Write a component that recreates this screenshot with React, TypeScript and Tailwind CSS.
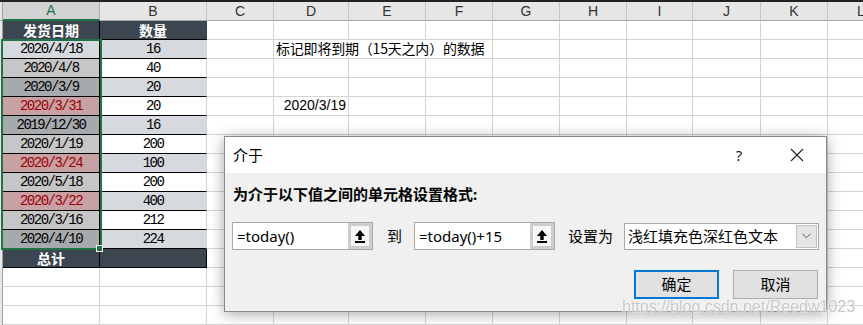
import React from 'react';

const REST = [
  'w-[67px]',
  'w-[75px]',
  'w-[77px]',
  'w-[67px]',
  'w-[67px]',
  'w-[67px]',
  'w-[66px]',
  'w-[68px]',
  'w-[67px]',
  'w-[67px]',
];

const HEAD = [
  { l: 'C', w: 'w-[67px]' },
  { l: 'D', w: 'w-[75px]' },
  { l: 'E', w: 'w-[77px]' },
  { l: 'F', w: 'w-[67px]' },
  { l: 'G', w: 'w-[67px]' },
  { l: 'H', w: 'w-[67px]' },
  { l: 'I', w: 'w-[66px]' },
  { l: 'J', w: 'w-[68px]' },
  { l: 'K', w: 'w-[67px]' },
  { l: 'L', w: 'w-[67px]' },
];

const DATA = [
  { a: '2020/4/18', b: '16', ac: 'bg-[#d6dade] text-black', bc: 'bg-[#d6dade]' },
  { a: '2020/4/8', b: '40', ac: 'bg-[#c6c6c6] text-black', bc: 'bg-white' },
  { a: '2020/3/9', b: '20', ac: 'bg-[#a7aaad] text-black', bc: 'bg-[#d6dade]' },
  { a: '2020/3/31', b: '20', ac: 'bg-[#c7a1a4] text-[#9c0006]', bc: 'bg-white' },
  { a: '2019/12/30', b: '16', ac: 'bg-[#a7aaad] text-black', bc: 'bg-[#d6dade]' },
  { a: '2020/1/19', b: '200', ac: 'bg-[#c6c6c6] text-black', bc: 'bg-white' },
  { a: '2020/3/24', b: '100', ac: 'bg-[#c7a1a4] text-[#9c0006]', bc: 'bg-[#d6dade]' },
  { a: '2020/5/18', b: '200', ac: 'bg-[#c6c6c6] text-black', bc: 'bg-white' },
  { a: '2020/3/22', b: '400', ac: 'bg-[#c7a1a4] text-[#9c0006]', bc: 'bg-[#d6dade]' },
  { a: '2020/3/16', b: '212', ac: 'bg-[#c6c6c6] text-black', bc: 'bg-white' },
  { a: '2020/4/10', b: '224', ac: 'bg-[#a7aaad] text-black', bc: 'bg-[#d6dade]' },
];

function RowHdr() {
  return <div className="w-[3px] h-full shrink-0 bg-[#e6e6e6] border-r border-[#a0a0a0]" />;
}

function Blank({ w }: { w: string }) {
  return <div className={`${w} h-full shrink-0 border-r border-b border-[#d4d4d4]`} />;
}

function RestCells({ row }: { row: number }) {
  if (row === 2) {
    return (
      <>
        <Blank w="w-[67px]" />
        <div className="w-[219px] h-full shrink-0 border-r border-b border-[#d4d4d4] flex items-end pl-[2px] pb-[1px] whitespace-nowrap text-[14px] leading-[17px] tracking-[-0.2px] text-black font-['Noto_Sans_CJK_SC',sans-serif]">
          标记即将到期（15天之内）的数据
        </div>
        {REST.slice(4).map((w, i) => (
          <Blank key={i} w={w} />
        ))}
      </>
    );
  }
  if (row === 5) {
    return (
      <>
        <Blank w="w-[67px]" />
        <div className="w-[75px] h-full shrink-0 border-r border-b border-[#d4d4d4] flex items-end justify-end pr-[2px] pb-[1px] whitespace-nowrap text-[14px] leading-[17px] text-black font-['Liberation_Sans',sans-serif]">
          2020/3/19
        </div>
        {REST.slice(2).map((w, i) => (
          <Blank key={i} w={w} />
        ))}
      </>
    );
  }
  return (
    <>
      {REST.map((w, i) => (
        <Blank key={i} w={w} />
      ))}
    </>
  );
}

function UploadIcon() {
  return (
    <svg width="12" height="14" viewBox="0 0 12 14">
      <polygon points="6,1 1,7 11,7" fill="#000" />
      <rect x="4.3" y="6.5" width="3.4" height="4.5" fill="#000" />
      <rect x="1" y="12" width="10" height="2" fill="#000" />
    </svg>
  );
}

function RefInput({ value }: { value: string }) {
  return (
    <div className="w-[141px] h-[28px] shrink-0 flex border border-[#a9a9a9] bg-white">
      <div className="flex-1 flex items-center pl-[4px] text-[15px] text-black whitespace-nowrap font-['Noto_Sans','Noto_Sans_CJK_SC',sans-serif]">
        {value}
      </div>
      <div className="w-[24px] h-full shrink-0 border-[3px] border-[#cccccc] bg-[#f7f7f7] flex items-center justify-center">
        <UploadIcon />
      </div>
    </div>
  );
}

export default function App() {
  return (
    <div className="relative w-[863px] h-[325px] overflow-hidden bg-white font-['Liberation_Sans',sans-serif]">
      {/* top dark line */}
      <div className="h-[2px] bg-[#222222]" />
      {/* column headers */}
      <div className="flex h-[19px]">
        <div className="w-[3px] h-full shrink-0 bg-[#e6e6e6] border-r border-b border-[#a0a0a0]" />
        <div className="w-[97px] h-full shrink-0 bg-[#d2d2d2] border-r border-[#b0b0b0] border-b-2 border-b-[#217346] flex items-center justify-center text-[14px] text-[#217346]">
          A
        </div>
        <div className="w-[107px] h-full shrink-0 bg-[#e6e6e6] border-r border-b border-r-[#c6c6c6] border-b-[#a8a8a8] flex items-center justify-center text-[14px] text-[#333333]">
          B
        </div>
        {HEAD.map((h) => (
          <div
            key={h.l}
            className={`${h.w} h-full shrink-0 bg-[#e6e6e6] border-r border-b border-r-[#c6c6c6] border-b-[#a8a8a8] flex items-center justify-center text-[14px] text-[#333333]`}
          >
            {h.l}
          </div>
        ))}
      </div>

      {/* row 1: table header */}
      <div className="flex h-[19px]">
        <RowHdr />
        <div className="w-[97px] h-full shrink-0 bg-[#3b4651] border-r border-b border-black flex items-center justify-center text-[14px] font-bold text-white font-['Noto_Sans_CJK_SC',sans-serif]">
          发货日期
        </div>
        <div className="w-[107px] h-full shrink-0 bg-[#3b4651] border-b border-black border-r border-r-[#3b4651] flex items-center justify-center text-[14px] font-bold text-white font-['Noto_Sans_CJK_SC',sans-serif]">
          数量
        </div>
        <RestCells row={1} />
      </div>

      {/* data rows */}
      {DATA.map((d, i) => (
        <div key={i} className="flex h-[19px]">
          <RowHdr />
          <div
            className={`${d.ac} w-[97px] h-full shrink-0 border-r border-b border-black flex items-end justify-center pb-[2px] text-[14px] leading-[14px] tracking-[-1.5px] font-['Liberation_Mono',monospace]`}
          >
            {d.a}
          </div>
          <div
            className={`${d.bc} w-[107px] h-full shrink-0 border-b border-black border-r border-r-[#d4d4d4] flex items-end justify-center pb-[2px] text-[14px] leading-[14px] tracking-[-1.5px] text-black font-['Liberation_Mono',monospace]`}
          >
            {d.b}
          </div>
          <RestCells row={i + 2} />
        </div>
      ))}

      {/* total row */}
      <div className="flex h-[19px]">
        <RowHdr />
        <div className="w-[97px] h-full shrink-0 bg-[#3b4651] border-r border-b border-black flex items-center justify-center text-[14px] font-bold text-white font-['Noto_Sans_CJK_SC',sans-serif]">
          总计
        </div>
        <div className="w-[107px] h-full shrink-0 bg-[#3b4651] border-b border-r border-black" />
        <RestCells row={13} />
      </div>

      {/* empty rows */}
      {[14, 15, 16].map((r) => (
        <div key={r} className="flex h-[19px]">
          <RowHdr />
          <Blank w="w-[97px]" />
          <Blank w="w-[107px]" />
          <RestCells row={r} />
        </div>
      ))}

      {/* selection overlay */}
      <div className="absolute left-[1px] top-[39px] w-[101px] h-[211px] border-2 border-[#217346] pointer-events-none" />
      <div className="absolute left-[96px] top-[245px] w-[7px] h-[7px] bg-[#217346] border border-white" />

      {/* dialog */}
      <div className="absolute left-[224px] top-[136px] w-[603px] h-[176px] border border-[#8a8a8a] bg-[#f0f0f0] shadow-[0_2px_14px_rgba(0,0,0,0.35)] flex flex-col font-['Noto_Sans','Noto_Sans_CJK_SC',sans-serif] text-black">
        <div className="h-[36px] shrink-0 bg-white flex items-center">
          <div className="pl-[8px] text-[15px] leading-[20px]">介于</div>
          <div className="ml-auto w-[46px] flex items-center justify-center text-[15px] leading-[20px] text-[#222]">?</div>
          <div className="ml-[12px] mr-[6px] w-[46px] flex items-center justify-center">
            <svg width="14" height="14" viewBox="0 0 14 14">
              <path d="M1 1 L13 13 M13 1 L1 13" stroke="#222" strokeWidth="1.1" fill="none" />
            </svg>
          </div>
        </div>
        <div className="flex-1 flex flex-col pl-[7px]">
          <div className="mt-[11px] pl-[1px] text-[15px] leading-[20px] font-bold whitespace-nowrap">为介于以下值之间的单元格设置格式:</div>
          <div className="mt-[18px] flex items-center h-[28px]">
            <RefInput value="=today()" />
            <div className="ml-[14px] w-[15px] shrink-0 text-[15px] leading-[20px] whitespace-nowrap">到</div>
            <div className="ml-[12px] shrink-0">
              <RefInput value="=today()+15" />
            </div>
            <div className="ml-[13px] w-[45px] shrink-0 text-[15px] leading-[20px] whitespace-nowrap">设置为</div>
            <div className="ml-[11px] w-[195px] h-[27px] shrink-0 border border-[#a9a9a9] bg-white flex">
              <div className="flex-1 flex items-center pl-[3px] text-[15px] whitespace-nowrap">浅红填充色深红色文本</div>
              <div className="w-[21px] m-[1px] shrink-0 bg-[#e5e5e5] border border-[#c2c2c2] flex items-center justify-center">
                <svg width="9" height="6" viewBox="0 0 9 6">
                  <path d="M0.5 0.8 L4.5 4.8 L8.5 0.8" stroke="#5a5a5a" strokeWidth="1" fill="none" />
                </svg>
              </div>
            </div>
          </div>
          <div className="mt-[20px] flex justify-end gap-[14px] pr-[8px]">
            <div className="w-[85px] h-[29px] border-2 border-[#0078d7] bg-[#e1e1e1] flex items-center justify-center text-[15px]">确定</div>
            <div className="w-[85px] h-[29px] border border-[#adadad] bg-[#e1e1e1] flex items-center justify-center text-[15px]">取消</div>
          </div>
        </div>
      </div>

      {/* watermark */}
      <div className="absolute left-[622px] top-[298px] text-[16px] leading-[18px] whitespace-nowrap text-[#c4c4c4] opacity-90 font-['Liberation_Sans',sans-serif] [text-shadow:0_0_1px_#fff,0_0_2px_#fff,0_0_2px_#fff]">
        https://blog.csdn.net/Reedw1023
      </div>
    </div>
  );
}
